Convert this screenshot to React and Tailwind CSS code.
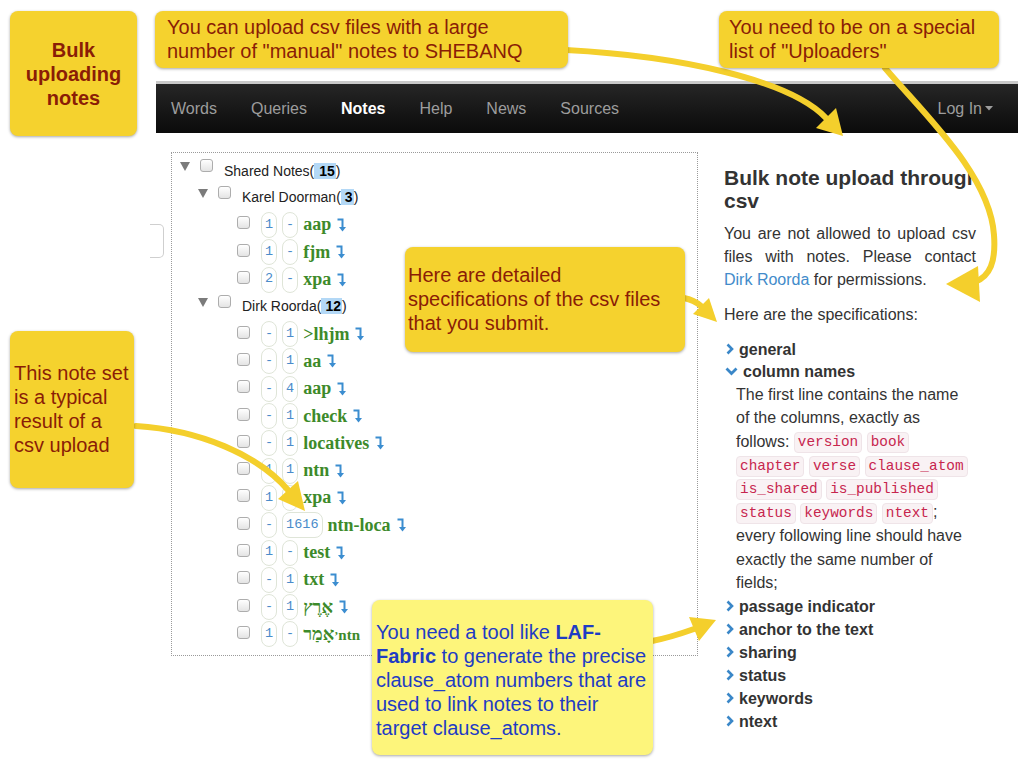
const SANS = "font-['Liberation_Sans',Arial,sans-serif]";

const KAREL = [
  ["1", "-", "aap"],
  ["1", "-", "fjm"],
  ["2", "-", "xpa"],
];

const DIRK = [
  ["-", "1", ">lhjm"],
  ["-", "1", "aa"],
  ["-", "4", "aap"],
  ["-", "1", "check"],
  ["-", "1", "locatives"],
  ["1", "1", "ntn"],
  ["1", "-", "xpa"],
  ["-", "1616", "ntn-loca"],
  ["1", "-", "test"],
  ["-", "1", "txt"],
  ["-", "1", "אֶרֶץ"],
];

const SPECS = ["passage indicator", "anchor to the text", "sharing", "status", "keywords", "ntext"];

function Checkbox() {
  return (
    <span className="inline-block w-[13px] h-[13px] shrink-0 mb-[4px] rounded-[3px] border border-[#adadad] bg-linear-to-b from-white to-[#e4e4e4]" />
  );
}

function Tri() {
  return (
    <svg width="10" height="9" viewBox="0 0 10 9" className="shrink-0 mb-[9px]">
      <path d="M0 0H10L5 9Z" fill="#7b7b7b" />
    </svg>
  );
}

function DownHook() {
  return (
    <svg width="9" height="14" viewBox="0 0 9 14" className="shrink-0 ml-[6px]">
      <path d="M0.5 1.5H5.5V9.5" stroke="#3b8dd0" strokeWidth="2" fill="none" />
      <path d="M2 9H9L5.5 13.5Z" fill="#3b8dd0" />
    </svg>
  );
}

function Badge({ children }) {
  return (
    <span className="h-[26px] min-w-[15px] px-[3px] flex items-center justify-center rounded-[8px] border border-[#dfe5d8] text-[#4a8cca] text-[13.5px] font-['Liberation_Mono',monospace]">
      {children}
    </span>
  );
}

function Leaf({ a, b, name, hook = true }) {
  return (
    <div className="flex items-center h-[27.3px] pl-[65px]">
      <Checkbox />
      <div className="ml-[11px] flex items-center gap-[5px]">
        <Badge>{a}</Badge>
        <Badge>{b}</Badge>
        <span className="font-['Liberation_Serif',serif] font-bold text-[18px] text-[#3d8a2a] whitespace-nowrap">{name}</span>
      </div>
      {hook && <DownHook />}
    </div>
  );
}

function Group({ label, count, indent }) {
  return (
    <div className={`flex items-center h-[27.3px] ${indent}`}>
      <Tri />
      <span className="ml-[10px]"><Checkbox /></span>
      <span className="ml-[11px] text-[14px] text-[#222] whitespace-nowrap">
        {label}(<span className="bg-[#b3d8f6] font-bold text-black pl-[4px] pr-[1px]">{count}</span>)
      </span>
    </div>
  );
}

function Chevron({ open }) {
  if (open) {
    return (
      <svg width="13" height="9" viewBox="0 0 13 9" className="shrink-0 ml-[1px]">
        <path d="M1.5 1.5L6.5 6.5L11.5 1.5" stroke="#3a87c8" strokeWidth="2.8" fill="none" />
      </svg>
    );
  }
  return (
    <svg width="8" height="12" viewBox="0 0 8 12" className="shrink-0 ml-[2px]">
      <path d="M1.5 1.5L6 6L1.5 10.5" stroke="#3a87c8" strokeWidth="2.6" fill="none" />
    </svg>
  );
}

function Spec({ children, open }) {
  return (
    <div className={`flex items-center ${open ? "h-[22px]" : "h-[23px]"}`}>
      <Chevron open={open} />
      <span className="font-bold text-[#333] ml-[5px]">{children}</span>
    </div>
  );
}

function Code({ children }) {
  return (
    <code className="inline-block align-middle rounded-[4px] border border-[#efe4e8] bg-[#f9f2f4] px-[3px] leading-[19px] text-[14.4px] text-[#c7254e] font-['Liberation_Mono',monospace]">
      {children}
    </code>
  );
}

function Callout({ className, children }) {
  return (
    <div className={`absolute rounded-[8px] shadow-[0_1px_3px_rgba(0,0,0,0.35)] text-[20px] leading-[24px] ${className}`}>
      {children}
    </div>
  );
}

export default function App() {
  return (
    <div className={`relative w-[1024px] h-[768px] overflow-hidden bg-white ${SANS}`}>
      <div className="pt-[81px] pl-[156px] pr-[6px]">
        <nav className="h-[52px] border-t-[3px] border-[#c9c9c9] bg-linear-to-b from-[#262626] to-[#0b0b0b] flex items-center pl-[15px] pr-[25px] text-[16px] text-[#9d9d9d]">
          <div className="flex items-center gap-[34px]">
            <span>Words</span>
            <span>Queries</span>
            <span className="text-white font-bold">Notes</span>
            <span>Help</span>
            <span>News</span>
            <span>Sources</span>
          </div>
          <div className="ml-auto flex items-center gap-[3px]">
            <span>Log In</span>
            <svg width="8" height="5" viewBox="0 0 8 5"><path d="M0 0H8L4 4.5Z" fill="#9d9d9d" /></svg>
          </div>
        </nav>

        <div className="flex items-start">
          <div className="ml-[15px] mt-[19px] w-[527px] h-[504px] border border-dotted border-[#9a9a9a] pt-[5px]">
            <div className="flex items-center h-[26px] pl-[8px]">
              <Tri />
              <span className="ml-[10px]"><Checkbox /></span>
              <span className="ml-[11px] text-[14px] text-[#222] whitespace-nowrap">
                Shared Notes(<span className="bg-[#b3d8f6] font-bold text-black pl-[5px] pr-[1px]">15</span>)
              </span>
            </div>
            <Group label="Karel Doorman" count="3" indent="pl-[26px]" />
            {KAREL.map(([a, b, n]) => (
              <Leaf key={"k" + n} a={a} b={b} name={n} />
            ))}
            <Group label="Dirk Roorda" count="12" indent="pl-[26px]" />
            {DIRK.map(([a, b, n]) => (
              <Leaf key={"d" + n + a + b} a={a} b={b} name={n} />
            ))}
            <Leaf
              a="1"
              b="-"
              hook={false}
              name={
                <>
                  <span>אָמַר</span>
                  <span className="text-[12px]">ʼ</span>
                  <span className="text-[15px]">ntn</span>
                </>
              }
            />
          </div>

          <div className="ml-[26px] mt-[32.5px] w-[252px] text-[16px] leading-[23px] text-[#333]">
            <h3 className="w-[248px] overflow-hidden whitespace-nowrap text-[21px] font-bold leading-[23px] text-[#333]">
              Bulk note upload through
              <br />
              csv
            </h3>
            <p className="mt-[10px] text-justify">
              You are not allowed to upload csv files with notes. Please contact{" "}
              <span className="text-[#428bca]">Dirk&nbsp;Roorda</span> for permissions.
            </p>
            <p className="mt-[12px]">Here are the specifications:</p>
            <div className="mt-[12px]">
              <Spec>general</Spec>
              <Spec open>column names</Spec>
              <div className="ml-[12px] w-[236px] leading-[23.6px]">
                The first line contains the name of the columns, exactly as follows: <Code>version</Code>{" "}
                <Code>book</Code> <Code>chapter</Code> <Code>verse</Code> <Code>clause_atom</Code>{" "}
                <Code>is_shared</Code> <Code>is_published</Code> <Code>status</Code> <Code>keywords</Code>{" "}
                <Code>ntext</Code>; every following line should have exactly the same number of fields;
              </div>
              {SPECS.map((s) => (
                <Spec key={s}>{s}</Spec>
              ))}
            </div>
          </div>
        </div>
      </div>

      {/* edge of a box peeking out left of the tree */}
      <div className="absolute left-[150px] top-[224px] w-[14px] h-[34px] border border-l-0 border-[#cfcfcf] rounded-r-[5px]" />

      <svg className="absolute left-0 top-0 pointer-events-none" width="1024" height="768" viewBox="0 0 1024 768">
        <g stroke="#f4cf2c" strokeWidth="6" fill="none" strokeLinecap="round">
          <path d="M566 50 C 680 56, 790 80, 826 118" />
          <path d="M885 68 C 925 115, 990 175, 994 235 C 996 262, 990 276, 975 282" />
          <path d="M684 298 Q 694 300 701 306" />
          <path d="M136 426 C 200 430, 258 455, 288 490" />
          <path d="M652 641 C 668 638, 680 634, 694 629" />
        </g>
        <g fill="#f4cf2c">
          <polygon points="836,108 816,128 843,136" />
          <polygon points="946,284 978,266 980,302" />
          <polygon points="709,298 693,314 717,322" />
          <polygon points="298,481 278,499 305,511" />
          <polygon points="699,641 689,617 716,620" />
        </g>
      </svg>

      <Callout className="left-[10px] top-[11px] w-[127px] h-[125px] bg-[#f5d22e] text-[#8a1d06] font-bold leading-[23px] flex items-center justify-center text-center">
        <div>
          Bulk
          <br />
          uploading
          <br />
          notes
        </div>
      </Callout>

      <Callout className="left-[155px] top-[11px] w-[413px] h-[57px] bg-[#f5d22e] text-[#8a1d06] pl-[12px] pt-[4px]">
        You can upload csv files with a large
        <br />
        number of "manual" notes to SHEBANQ
      </Callout>

      <Callout className="left-[719px] top-[11px] w-[280px] h-[57px] bg-[#f5d22e] text-[#8a1d06] pl-[10px] pt-[4px]">
        You need to be on a special
        <br />
        list of "Uploaders"
      </Callout>

      <Callout className="left-[405px] top-[247px] w-[280px] h-[105px] bg-[#f5d22e] text-[#8a1d06] pl-[3px] pt-[16px]">
        Here are detailed
        <br />
        specifications of the csv files
        <br />
        that you submit.
      </Callout>

      <Callout className="left-[10px] top-[331px] w-[124px] h-[157px] bg-[#f5d22e] text-[#8a1d06] pl-[4px] pt-[30px]">
        This note set
        <br />
        is a typical
        <br />
        result of a
        <br />
        csv upload
      </Callout>

      <Callout className="left-[372px] top-[600px] w-[281px] h-[155px] bg-[#fdf57b] text-[#1f3cc4] pl-[4px] pt-[20px]">
        You need a tool like <b>LAF-</b>
        <br />
        <b>Fabric</b> to generate the precise
        <br />
        clause_atom numbers that are
        <br />
        used to link notes to their
        <br />
        target clause_atoms.
      </Callout>
    </div>
  );
}
